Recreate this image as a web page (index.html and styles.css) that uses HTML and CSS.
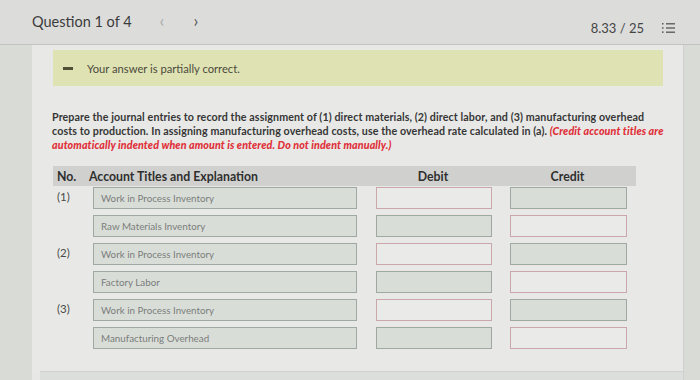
FILE: index.html
```html
<!DOCTYPE html>
<html>
<head>
<meta charset="utf-8">
<link rel="stylesheet" href="styles.css">
</head>
<body>
<header class="topbar">
  <div class="qnav">
    <span class="qtitle">Question 1 of 4</span>
    <span class="arrow dim">&lsaquo;</span>
    <span class="arrow">&rsaquo;</span>
  </div>
  <div class="score">
    <span>8.33 / 25</span>
    <svg class="listicon" width="14" height="12" viewBox="0 0 14 12">
      <g fill="#555">
        <rect x="0" y="1" width="1.5" height="1.5"/>
        <rect x="0" y="5.2" width="1.5" height="1.5"/>
        <rect x="0" y="9.4" width="1.5" height="1.5"/>
      </g>
      <g stroke="#555" stroke-width="1.3">
        <line x1="4" y1="1.8" x2="13" y2="1.8"/>
        <line x1="4" y1="6" x2="13" y2="6"/>
        <line x1="4" y1="10.2" x2="13" y2="10.2"/>
      </g>
    </svg>
  </div>
</header>
<main class="main">
  <div class="panel">
    <div class="banner">
      <span class="dash"></span>
      <span>Your answer is partially correct.</span>
    </div>
    <p class="prompt">Prepare the journal entries to record the assignment of (1) direct materials, (2) direct labor, and (3) manufacturing overhead<br>costs to production. In assigning manufacturing overhead costs, use the overhead rate calculated in (a). <em class="warn">(Credit account titles are<br>automatically indented when amount is entered. Do not indent manually.)</em></p>
    <div class="journal">
      <div class="jhead">
        <span class="c-no">No.</span>
        <span class="c-acct">Account Titles and Explanation</span>
        <span class="c-debit">Debit</span>
        <span class="c-credit">Credit</span>
      </div>
      <div class="jrow">
        <span class="c-no num">(1)</span>
        <div class="field acct filled">Work in Process Inventory</div>
        <div class="field debit empty"></div>
        <div class="field credit filled"></div>
      </div>
      <div class="jrow">
        <span class="c-no num"></span>
        <div class="field acct filled">Raw Materials Inventory</div>
        <div class="field debit filled"></div>
        <div class="field credit empty"></div>
      </div>
      <div class="jrow">
        <span class="c-no num">(2)</span>
        <div class="field acct filled">Work in Process Inventory</div>
        <div class="field debit empty"></div>
        <div class="field credit filled"></div>
      </div>
      <div class="jrow">
        <span class="c-no num"></span>
        <div class="field acct filled">Factory Labor</div>
        <div class="field debit filled"></div>
        <div class="field credit empty"></div>
      </div>
      <div class="jrow">
        <span class="c-no num">(3)</span>
        <div class="field acct filled">Work in Process Inventory</div>
        <div class="field debit empty"></div>
        <div class="field credit filled"></div>
      </div>
      <div class="jrow">
        <span class="c-no num"></span>
        <div class="field acct filled">Manufacturing Overhead</div>
        <div class="field debit filled"></div>
        <div class="field credit empty"></div>
      </div>
    </div>
  </div>
  <div class="footerband"></div>
</main>
</body>
</html>
```
FILE: styles.css
```css
html, body {
  margin: 0;
  padding: 0;
}
body {
  width: 700px;
  height: 380px;
  overflow: hidden;
  background: #d9dbd7;
  font-family: Lato, "Open Sans", sans-serif;
  color: #3a3a3a;
}
.topbar {
  height: 44px;
  background: #dcdddb;
  border-bottom: 1px solid #c3c4c1;
  display: flex;
  align-items: center;
  justify-content: space-between;
  padding: 0 24px 0 32px;
}
.qnav {
  display: flex;
  align-items: center;
}
.qtitle {
  font-size: 14.5px;
  color: #3b3b3b;
  margin-top: -2px;
}
.arrow {
  font-size: 17px;
  color: #555;
  margin-top: -3px;
}
.arrow.dim {
  color: #a9aaa8;
  margin-left: 28px;
  margin-right: 29px;
}
.score {
  display: flex;
  align-items: center;
  gap: 18px;
  font-size: 13px;
  color: #444;
  margin-top: 12px;
}
.main {
  margin-left: 32px;
  width: 651px;
  height: 335px;
  background: #e7e8e5;
  border-right: 1px solid #cfd0cd;
  position: relative;
}
.panel {
  padding: 5px 20px 0 20px;
  height: 322px;
  background: #e8e9e6;
}
.banner {
  height: 36px;
  width: 610px;
  margin-left: 1px;
  background: #dfe2b3;
  display: flex;
  align-items: center;
  font-size: 11.2px;
  color: #4b4b3d;
}
.dash {
  display: inline-block;
  width: 10px;
  height: 3px;
  background: #4f5035;
  margin-left: 10px;
  margin-right: 14px;
}
.prompt {
  margin: 24px 0 0 0;
  font-size: 10.7px;
  letter-spacing: 0.1px;
  line-height: 14px;
  color: #363636;
  font-weight: 700;
  white-space: nowrap;
}
.warn {
  color: #e0303a;
  font-weight: 900;
}
.journal {
  margin-top: 14px;
}
.jhead {
  display: grid;
  grid-template-columns: 36px 264px 19px 116px 18px 117px 13px;
  grid-template-areas: "no acct . debit . credit .";
  width: 583px;
  margin-left: 1px;
  height: 20px;
  align-items: center;
  background: #d0d1ce;
  font-size: 12.3px;
  font-weight: 700;
  color: #2f2f2f;
}
.jhead .c-no { grid-area: no; padding-left: 4px; }
.jhead .c-acct { grid-area: acct; }
.jhead .c-debit { grid-area: debit; text-align: center; padding-left: 6px; }
.jhead .c-credit { grid-area: credit; text-align: center; padding-left: 6px; }
.jrow {
  display: grid;
  grid-template-columns: 40px 264px 19px 116px 18px 117px;
  grid-template-areas: "no acct . debit . credit";
  margin-left: 1px;
  margin-top: 6px;
  height: 22px;
  align-items: center;
}
.jhead + .jrow {
  margin-top: 1px;
}
.jrow .num { grid-area: no; }
.jrow .acct { grid-area: acct; }
.jrow .debit { grid-area: debit; }
.jrow .credit { grid-area: credit; }
.num {
  font-size: 11.5px;
  color: #4a4a4a;
  padding-left: 4px;
  margin-top: -4px;
}
.field {
  box-sizing: border-box;
  height: 22px;
  font-size: 9.8px;
  color: #7a7d7a;
  padding-left: 7px;
  display: flex;
  align-items: center;
}
.filled {
  background: #d9ddd8;
  border: 1px solid #9fa9a1;
}
.empty {
  background: #eaebe8;
  border: 1px solid #c9a7aa;
}
.footerband {
  position: absolute;
  left: 8px;
  right: 0;
  bottom: 0;
  height: 8px;
  background: #dcdedb;
  border-top: 1px solid #d0d1ce;
}
```
